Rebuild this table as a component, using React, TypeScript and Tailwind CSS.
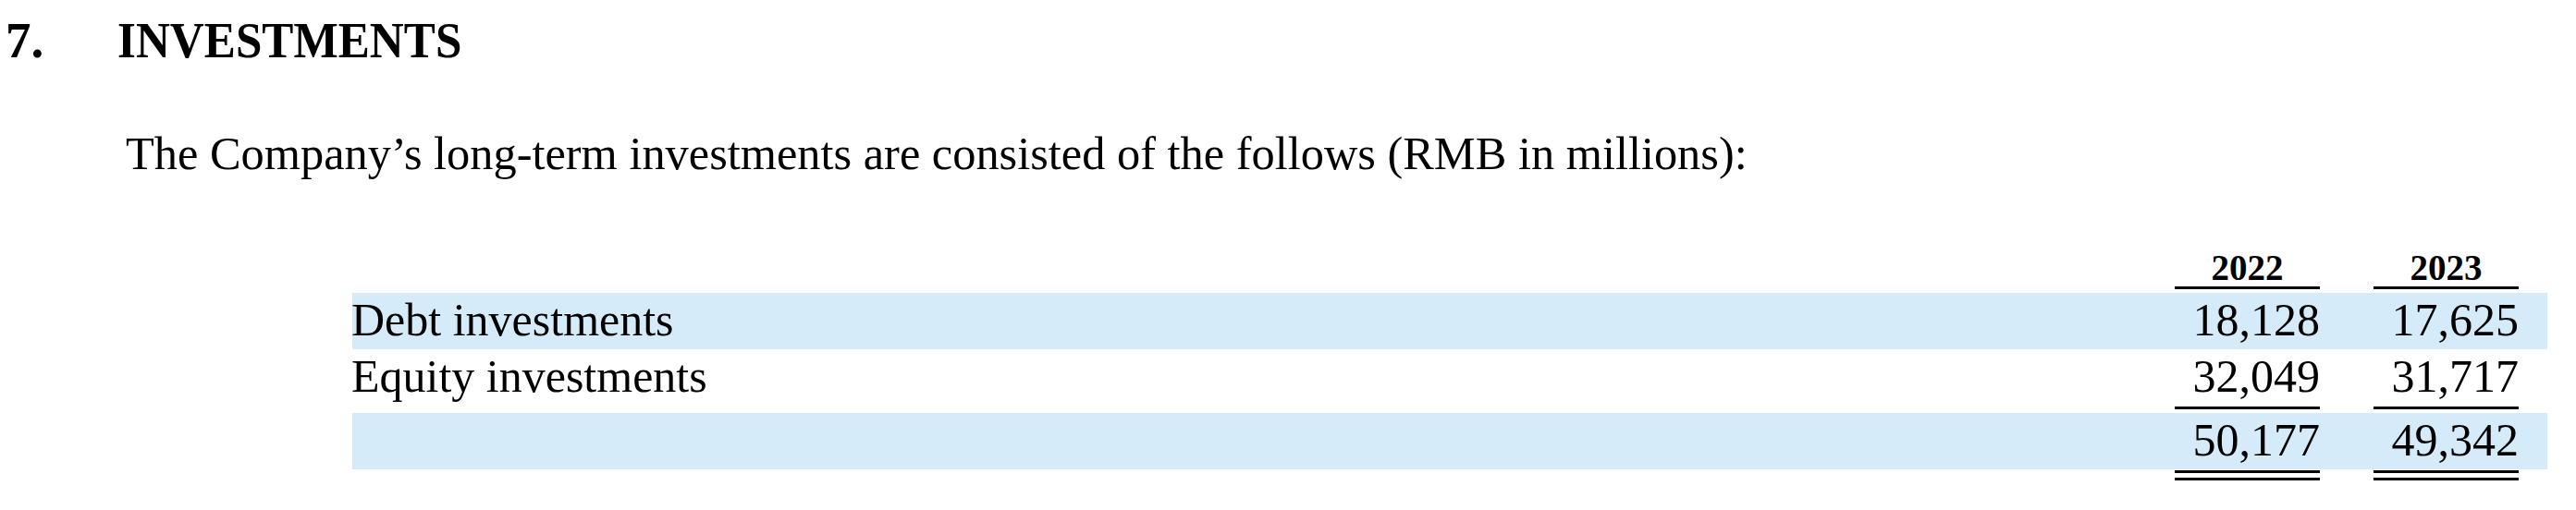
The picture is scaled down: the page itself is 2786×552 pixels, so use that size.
import React from "react";

const cols = "grid grid-cols-[1971px_157px_58px_157px_31px]";

function Num({ v, className = "" }: { v: string; className?: string }) {
  return <div className={"text-right " + className}>{v}</div>;
}

function Cell() {
  return <div />;
}

export default function App() {
  return (
    <div className="w-[2786px] h-[552px] bg-white text-black font-['Liberation_Serif',_'Times_New_Roman',_serif] overflow-hidden">
      <div className="flex pt-[16px] text-[55px] leading-[55px] font-bold">
        <div className="w-[127px] pl-[6px]">7.</div>
        <div>
          <span className="inline-block origin-left scale-x-[0.93]">INVESTMENTS</span>
        </div>
      </div>
      <div className="mt-[70px] pl-[136px] text-[50.4px] leading-[50px] whitespace-nowrap">
        The Company’s long-term investments are consisted of the follows (RMB in millions):
      </div>
      <div className="mt-[79px] ml-[381px] w-[2374px]">
        <div className={cols + " text-[39px] leading-[40px] font-bold"}>
          <Cell />
          <div className="text-center border-b-[3px] border-black">2022</div>
          <Cell />
          <div className="text-center border-b-[3px] border-black">2023</div>
          <Cell />
        </div>
        <div className={cols + " mt-[4px] bg-[#d5ebf9] text-[50px] leading-[58px] pb-[3px]"}>
          <div className="-ml-[1px]">Debt investments</div>
          <Num v="18,128" />
          <Cell />
          <Num v="17,625" />
          <Cell />
        </div>
        <div className={cols + " text-[50px] leading-[58px] mb-[4px]"}>
          <div className="-ml-[1px]">Equity investments</div>
          <Num v="32,049" className="pb-[4px] border-b-[3px] border-black" />
          <Cell />
          <Num v="31,717" className="pb-[4px] border-b-[3px] border-black" />
          <Cell />
        </div>
        <div className={cols + " bg-[#d5ebf9] text-[50px] leading-[58px] pb-[3px]"}>
          <Cell />
          <Num v="50,177" />
          <Cell />
          <Num v="49,342" />
          <Cell />
        </div>
        <div className={cols}>
          <Cell />
          <div className="pt-[1px]">
            <div className="h-[3px] bg-black" />
            <div className="mt-[5px] h-[3px] bg-black" />
          </div>
          <Cell />
          <div className="pt-[1px]">
            <div className="h-[3px] bg-black" />
            <div className="mt-[5px] h-[3px] bg-black" />
          </div>
          <Cell />
        </div>
      </div>
    </div>
  );
}
